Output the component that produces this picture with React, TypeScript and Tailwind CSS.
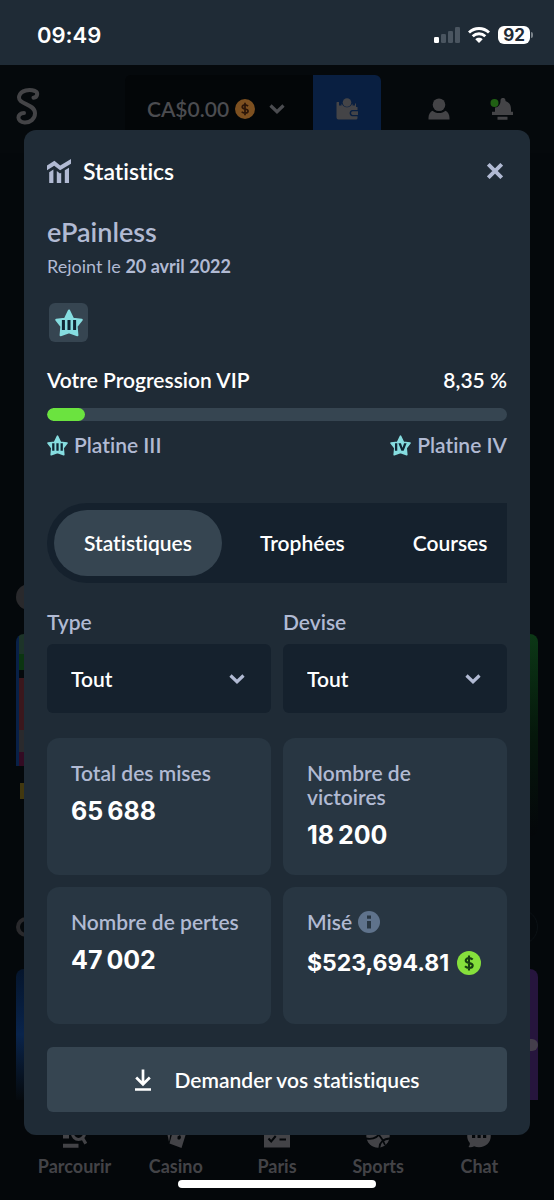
import { useId, useState } from "react";
import type { ReactNode } from "react";

const tabs = ["Statistiques", "Trophées", "Courses"];

const navItems = [
  { label: "Parcourir", Icon: BrowseIcon },
  { label: "Casino", Icon: CardsIcon },
  { label: "Paris", Icon: BetsIcon },
  { label: "Sports", Icon: BallIcon },
  { label: "Chat", Icon: ChatIcon },
];

function StatsIcon() {
  return (
    <svg viewBox="0 0 24 24" className="size-6" fill="currentColor" aria-hidden="true">
      <path d="M0 6.6 7.4 1.8l5.8 4.6L24 0v4.7L13.1 11.2 7.2 6.7 0 11.2z" />
      <path d="M2.2 13.3 6.4 10.6V24H2.2zM9.8 12l3.2 2.5 1.2-.7V24H9.8zM17.8 11.3 22 8.8V24h-4.2z" />
    </svg>
  );
}

function Logo() {
  return (
    <svg viewBox="0 0 24 37" className="h-[37px] w-6" fill="none" stroke="currentColor" strokeWidth="4" strokeLinecap="round" strokeLinejoin="round" aria-hidden="true">
      <path d="M17.500 9.800C21.500 9.200 22.500 4.500 19 3 13.500 1 5 2 3.200 8 1 17 18.500 15 19 25c.2 6-5 9.800-10.500 9.500C.5 34 .5 25 8 25" />
    </svg>
  );
}

function RankStar({ rank, className }: { rank: "III" | "IV"; className: string }) {
  return (
    <svg viewBox="0 0 24 24" className={className} aria-hidden="true">
      <path d="M12 1.300 15.400 8.300 22.900 9.300 18.500 14.900 19.200 22.500 12 20 4.800 22.500 5.500 14.900 1.100 9.300 8.600 8.300z" fill="#86dde0" stroke="#86dde0" strokeWidth="1.800" strokeLinejoin="round" />
      {rank === "III" ? (
        <path d="M5.900 9.400h2.600v8.600H5.900zM10.700 9.400h2.600v8.600h-2.600zM15.500 9.400h2.600v8.600h-2.600z" fill="#0f2634" />
      ) : (
        <path d="M5.700 9.400h2.600v8.600H5.700zM9.600 9.400h2.900l1.800 5.200 1.800-5.200H19l-3.400 8.600H13z" fill="#0f2634" />
      )}
    </svg>
  );
}

function Chevron({ className }: { className: string }) {
  return (
    <svg viewBox="0 0 16 10" className={className} fill="none" stroke="currentColor" strokeWidth="3.200" aria-hidden="true">
      <path d="M1.500 1.500 8 7.700l6.500-6.200" />
    </svg>
  );
}

function Coin({ className, fill, ink }: { className: string; fill: string; ink: string }) {
  return (
    <svg viewBox="0 0 24 24" className={className} fill="none" aria-hidden="true">
      <circle cx="12" cy="12" r="12" fill={fill} />
      <path d="M15.700 8.600c-1-1-2.200-1.500-3.700-1.500-2 0-3.300.9-3.300 2.400 0 3.600 7 1.400 7 5 0 1.500-1.400 2.500-3.600 2.500-1.700 0-3-.6-4.100-1.700M12 4.600v14.800" stroke={ink} strokeWidth="2.100" />
    </svg>
  );
}

function WalletIcon() {
  return (
    <svg viewBox="0 0 22 22" className="size-[22px]" fill="currentColor" aria-hidden="true">
      <circle cx="11" cy="4.500" r="4.300" />
      <path d="M1 4h2v3.500h2.500V5.500L7 7.500c2 2.400 6 2.400 8 0l1.500-2v2H19V5l1 1v3h1.500v3h-5c-3.800 0-3.800 6.200 0 6.200h5V20q0 1.500-1.500 1.500H2.500Q.5 21.500.5 19.500V4.500z" />
      <path d="M16.700 13.300H22v3.600h-5.300c-2.100 0-2.100-3.600 0-3.600z" />
    </svg>
  );
}

function UserIcon() {
  return (
    <svg viewBox="0 0 22 22" className="size-[22px]" fill="currentColor" aria-hidden="true">
      <circle cx="11" cy="6.800" r="6.300" />
      <path d="M4.600 12.700c3.200 3.200 9.600 3.200 12.800 0 2.500 1.100 4.100 3.800 4.100 7v1.800H.5v-1.800c0-3.200 1.600-5.900 4.100-7z" />
    </svg>
  );
}

function BellIcon() {
  return (
    <svg viewBox="0 0 24 22" className="h-[22px] w-6" fill="currentColor" aria-hidden="true">
      <path d="M10.500 3c-.2-4.300 5.200-4.300 5 0 3.600 1.300 5.500 4.200 5.500 8v2.700h2V17H2v-3.300h3V9.500c3 .3 5.500-3 5.500-6.500zM7.500 18.700h10v3h-10z" />
      <circle cx="4.500" cy="5" r="4" fill="#206013" />
    </svg>
  );
}

function BrowseIcon() {
  return (
    <svg viewBox="0 0 24 24" className="size-6" fill="none" stroke="currentColor" strokeWidth="3.200" aria-hidden="true">
      <path d="M0 5h7M0 12.500h6M0 21.700h15.500" strokeWidth="4" />
      <circle cx="15.500" cy="9.500" r="6" />
      <path d="m19.500 14 3.300 5.600" />
    </svg>
  );
}

function CardsIcon() {
  return (
    <svg viewBox="0 0 24 24" className="size-6" fill="currentColor" aria-hidden="true">
      <path d="m2.500 6 5-2L5 18z" />
      <path fillRule="evenodd" d="m10 3 12.500 5L17.500 24 5.500 19.500zM13.500 15c1.500 1.200 3.300.4 3.500-2l-1-2-2.500 1.500z" />
    </svg>
  );
}

function BetsIcon() {
  return (
    <svg viewBox="0 0 26 24" className="h-6 w-[26px]" aria-hidden="true">
      <path d="M0 2h26v21.500H0z" fill="currentColor" />
      <path d="m4.500 14.500 2.700 3 4.500-5.500M15.500 15.500H22M5 7h17" fill="none" stroke="#04070a" strokeWidth="2" />
    </svg>
  );
}

function BallIcon() {
  return (
    <svg viewBox="0 0 24 24" className="size-6" aria-hidden="true">
      <circle cx="12" cy="12" r="11.700" fill="currentColor" />
      <path d="M0 14.500c7 1.500 12-1 15.500-7.500M4 3.500c7 4 11.500 8.500 15 17.500M13.500 24c-.5-5 4-9.500 10.500-9.500" fill="none" stroke="#04070a" strokeWidth="1.800" />
    </svg>
  );
}

function ChatIcon() {
  return (
    <svg viewBox="0 0 24 24" className="size-6" aria-hidden="true">
      <path d="M12 1c7 0 11.800 4.700 11.800 11S19 23.200 12 23.200c-1.800 0-3.400-.3-4.800-.9-1.700.9-3.700 1.200-5.700.7 1-1.200 1.500-2.500 1.300-4C1.200 17.300.2 14.800.2 12 .2 5.700 5 1 12 1z" fill="currentColor" />
      <path d="M5 11h3.200v3H5zM10.500 11h3.200v3h-3.200zM16 11h3.200v3H16z" fill="#04070a" />
    </svg>
  );
}

function StatusBar() {
  return (
    <div className="flex h-[65px] items-center justify-between bg-[#1f2b36] pr-[21px] pl-[37px] font-['Inter',sans-serif] text-white">
      <span className="pt-1 text-[22px] leading-7 font-semibold">09:49</span>
      <div className="flex items-center gap-2 pt-1">
        <svg viewBox="0 0 26 16" className="h-4 w-[26px]" fill="#4a5560" aria-hidden="true">
          <rect x="0" y="10" width="5" height="6" rx="1.300" fill="#fff" />
          <rect x="7" y="7" width="5" height="9" rx="1.300" />
          <rect x="14" y="4" width="5" height="12" rx="1.300" />
          <rect x="21" y="0" width="5" height="16" rx="1.300" />
        </svg>
        <svg viewBox="0 0 22 16" className="h-4 w-[22px]" fill="none" stroke="#fff" strokeWidth="2.900" aria-hidden="true">
          <path d="M1 5.500c5.700-5.300 14.300-5.300 20 0M4.700 9.300c3.600-3.400 9-3.400 12.600 0" />
          <path d="M11 16 7.300 12.200c2.100-1.900 5.300-1.900 7.400 0z" fill="#fff" stroke="none" />
        </svg>
        <div className="flex items-center gap-px">
          <span className="flex h-[18px] w-8 items-center justify-center rounded-md bg-white text-[17px] leading-4 font-bold text-[#1f2b36]">92</span>
          <span className="h-1.5 w-0.5 rounded-r-full bg-[#7a838b]" />
        </div>
      </div>
    </div>
  );
}

function SiteHeader() {
  return (
    <header className="flex h-[88px] items-center bg-[#05090c] pr-10 pl-4 text-[#444447]">
      <a href="#" aria-label="Accueil" className="w-[109px] pb-1.5">
        <Logo />
      </a>
      <div className="flex h-[68px] overflow-hidden rounded-md">
        <button className="flex w-[188px] items-center bg-[#030608] pl-[22px] text-[21px] font-semibold text-[#4b4c50]">
          CA$0.00
          <Coin className="ml-1.5 size-5" fill="#7d5020" ink="#2b1508" />
          <Chevron className="ml-3.5 h-2.5 w-4" />
        </button>
        <button aria-label="Portefeuille" className="flex w-[68px] items-center justify-center bg-[#091f41]">
          <WalletIcon />
        </button>
      </div>
      <div className="ml-auto flex gap-10">
        <button aria-label="Profil"><UserIcon /></button>
        <button aria-label="Notifications"><BellIcon /></button>
      </div>
    </header>
  );
}

// Lobby rows that stay dimmed behind the dialog
function Lobby() {
  return (
    <main className="flex flex-1 flex-col px-4 pt-[431px]">
      <div className="size-[26px] rounded-full bg-[#29292c]" />
      <div className="mt-6 flex h-[202px] justify-between">
        <div className="flex w-40 flex-col overflow-hidden rounded-t-lg">
          <div className="flex flex-col border-l-3 border-[#082047]">
            <div className="h-5 bg-[#1d3429]" />
            <div className="h-4 bg-[#0b3511]" />
            <div className="h-2 bg-[#05090c]" />
            <div className="h-[52px] bg-[#3b171c]" />
            <div className="h-[22px] bg-[#2a2a2d]" />
            <div className="h-[14px] bg-[#330b23]" />
          </div>
          <div className="mt-[17px] ml-1 h-4 bg-[#42380f]" />
        </div>
        <div className="w-40 rounded-lg bg-linear-to-b from-[#0c3816] via-[#05170b] to-[#04070a]" />
      </div>
      <div className="mt-[77px] flex h-7 items-center justify-between">
        <div className="size-5 rounded-full border-4 border-[#29292c]" />
        <div className="h-9 w-20 rounded-full border border-[#0b1115]" />
      </div>
      <div className="mt-7 flex flex-1 justify-between">
        <div className="w-40 rounded-t-lg bg-linear-to-b from-[#05152c] via-[#09244c] to-[#05090d]" />
        <div className="flex w-40 items-center justify-end overflow-hidden rounded-t-lg bg-[#26153d]">
          <div className="mt-5 h-3 w-10 rounded-full bg-[#443e4b]" />
        </div>
      </div>
    </main>
  );
}

function BottomNav() {
  return (
    <nav className="grid h-[100px] grid-cols-5 bg-[#04070a] px-6 pt-6 text-[#434347]">
      {navItems.map(({ label, Icon }) => (
        <a key={label} href="#" className="flex flex-col items-center gap-1.5 text-lg leading-6 font-bold">
          <Icon />
          {label}
        </a>
      ))}
    </nav>
  );
}

function SelectField({ label }: { label: string }) {
  const id = useId();

  return (
    <div className="min-w-0">
      <label htmlFor={id} className="block text-[21px] leading-7 font-semibold">{label}</label>
      <div className="relative mt-2">
        <select id={id} className="h-[69px] w-full appearance-none rounded-md bg-[#15212d] px-6 text-[21px] font-semibold text-white">
          <option>Tout</option>
        </select>
        <Chevron className="pointer-events-none absolute top-1/2 right-[26px] h-2.5 w-4 -translate-y-1/2" />
      </div>
    </div>
  );
}

function StatCard({ label, children }: { label: ReactNode; children: ReactNode }) {
  return (
    <div className="rounded-xl bg-[#283642] px-6 pt-[23px] pb-[26px]">
      <dt className="text-[21px] leading-6 font-semibold">{label}</dt>
      <dd className="mt-3 font-['Inter',sans-serif] text-[25px] leading-7 font-bold text-white">{children}</dd>
    </div>
  );
}

function StatsDialog() {
  const [activeTab, setActiveTab] = useState(tabs[0]);
  const progress = 8.35;

  return (
    <section role="dialog" aria-labelledby="dialog-title" className="absolute inset-x-6 top-[130px] rounded-xl bg-[#1f2b36] px-[23px] pb-[23px] text-[#b1bad3]">
      <div className="flex h-[82px] items-center gap-3">
        <StatsIcon />
        <h2 id="dialog-title" className="text-[23px] font-semibold text-white">Statistics</h2>
        <button aria-label="Fermer" className="mr-1 ml-auto">
          <svg viewBox="0 0 16 16" className="size-4" stroke="currentColor" strokeWidth="3.800" aria-hidden="true">
            <path d="m1.300 1.300 13.400 13.400M14.700 1.300 1.300 14.700" />
          </svg>
        </button>
      </div>

      <h3 className="text-[27px] leading-10 font-semibold">ePainless</h3>
      <p className="text-lg leading-7">
        Rejoint le <strong className="font-bold">20 avril 2022</strong>
      </p>
      <div className="mt-[23px] ml-0.5 flex size-[39px] items-center justify-center rounded-md bg-[#364551]">
        <RankStar rank="III" className="size-7" />
      </div>

      <div className="mt-6 flex justify-between text-[21px] leading-7 font-semibold text-white">
        <span>Votre Progression VIP</span>
        <span>8,35 %</span>
      </div>
      <div role="progressbar" aria-label="Votre Progression VIP" aria-valuenow={progress} className="mt-3.5 h-[13px] overflow-hidden rounded-full bg-[#364551]">
        <div className="h-full rounded-full bg-[#6be33f]" style={{ width: `${progress}%` }} />
      </div>
      <div className="mt-2.5 flex justify-between text-[21px] leading-7 font-semibold">
        <span className="flex items-center gap-1.5">
          <RankStar rank="III" className="size-[21px]" />
          Platine III
        </span>
        <span className="flex items-center gap-1.5">
          <RankStar rank="IV" className="size-[21px]" />
          Platine IV
        </span>
      </div>

      <div role="tablist" className="mt-11 flex h-20 gap-2 overflow-hidden rounded-l-full bg-[#15212d] p-[7px]">
        {tabs.map((tab) => (
          <button
            key={tab}
            role="tab"
            aria-selected={tab === activeTab}
            onClick={() => setActiveTab(tab)}
            className={`shrink-0 rounded-full px-[30px] text-[21px] font-semibold text-white ${
              tab === activeTab ? "bg-[#364551]" : ""
            }`}
          >
            {tab}
          </button>
        ))}
      </div>

      <div className="mt-[25px] grid grid-cols-2 gap-3">
        <SelectField label="Type" />
        <SelectField label="Devise" />
      </div>

      <dl className="mt-[25px] grid auto-rows-fr grid-cols-2 gap-3">
        <StatCard label="Total des mises">65{"\u202f"}688</StatCard>
        <StatCard label="Nombre de victoires">18{"\u202f"}200</StatCard>
        <StatCard label="Nombre de pertes">47{"\u202f"}002</StatCard>
        <StatCard
          label={
            <span className="flex items-center gap-1.5">
              Misé
              <svg viewBox="0 0 22 22" className="size-[22px]" fill="#283642" aria-hidden="true">
                <circle cx="11" cy="11" r="11" fill="#5f738c" />
                <path d="M9 4.500h4v3.300H9zM9 10h4v7.500H9z" />
              </svg>
            </span>
          }
        >
          <span className="flex h-[34px] items-center gap-2 text-[23px]">
            $523,694.81
            <Coin className="size-6 shrink-0" fill="#86e03c" ink="#173d12" />
          </span>
        </StatCard>
      </dl>

      <button className="mt-[23px] flex h-[65px] w-full items-center justify-center gap-6 rounded-md bg-[#364551] text-[21px] font-semibold text-white">
        <svg viewBox="0 0 16 22" className="h-[22px] w-4" fill="none" stroke="currentColor" strokeWidth="2.700" aria-hidden="true">
          <path d="M8 .5v14.500M1.200 8.500 8 15.300l6.800-6.800M0 20.500h16" />
        </svg>
        Demander vos statistiques
      </button>
    </section>
  );
}

export default function App() {
  return (
    <div className="relative flex min-h-screen flex-col bg-[#04080b] font-['Lato','Open_Sans',sans-serif] [font-variant-ligatures:none]">
      <StatusBar />
      <SiteHeader />
      <Lobby />
      <BottomNav />
      <StatsDialog />
      <div className="absolute bottom-3 left-1/2 h-2 w-[198px] -translate-x-1/2 rounded-full bg-white" />
    </div>
  );
}
